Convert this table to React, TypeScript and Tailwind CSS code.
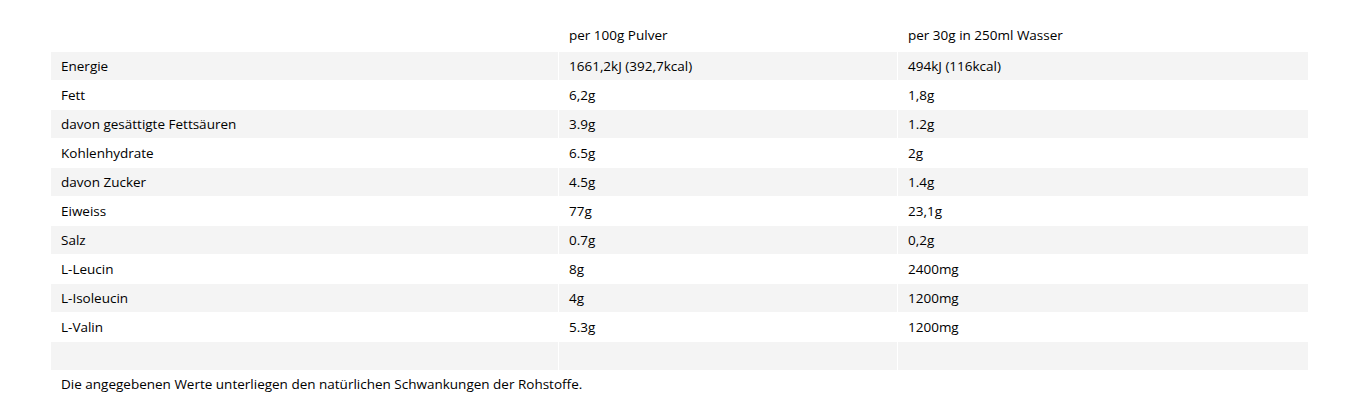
import React from 'react';

//영양 성분 행 데이터
const rows: [string, string, string][] = [
  ['Energie', '1661,2kJ (392,7kcal)', '494kJ (116kcal)'],
  ['Fett', '6,2g', '1,8g'],
  ['davon gesättigte Fettsäuren', '3.9g', '1.2g'],
  ['Kohlenhydrate', '6.5g', '2g'],
  ['davon Zucker', '4.5g', '1.4g'],
  ['Eiweiss', '77g', '23,1g'],
  ['Salz', '0.7g', '0,2g'],
  ['L-Leucin', '8g', '2400mg'],
  ['L-Isoleucin', '4g', '1200mg'],
  ['L-Valin', '5.3g', '1200mg'],
  ['', '', ''],
];

const App = () => {
  return (
    <div className="bg-white min-h-screen pt-[22px] px-[50px] text-[13.5px] text-black font-['Open_Sans',sans-serif]">
      <table className="table-fixed w-[1259px] border-separate border-spacing-px">
        <colgroup>
          <col className="w-[507px]" />
          <col className="w-[338px]" />
          <col className="w-[410px]" />
        </colgroup>
        <thead>
          <tr>
            <th className="h-7 px-[10px] pt-0 pb-[4px] font-normal text-left"></th>
            <th className="h-7 px-[10px] pt-0 pb-[4px] font-normal text-left">per 100g Pulver</th>
            <th className="h-7 px-[10px] pt-0 pb-[4px] font-normal text-left">per 30g in 250ml Wasser</th>
          </tr>
        </thead>
        <tbody>
          {rows.map((row, index) => (
            <tr key={index} className={index % 2 === 0 ? 'bg-[#f4f4f4]' : 'bg-white'}>
              {row.map((cell, i) => (
                <td key={i} className="h-7 px-[10px] py-0 align-middle">
                  {cell}
                </td>
              ))}
            </tr>
          ))}
        </tbody>
      </table>
      {/* 하단 안내 문구 */}
      <p className="pl-[11px] pt-[4px] leading-[18px]">
        Die angegebenen Werte unterliegen den natürlichen Schwankungen der Rohstoffe.
      </p>
    </div>
  );
};

export default App;
